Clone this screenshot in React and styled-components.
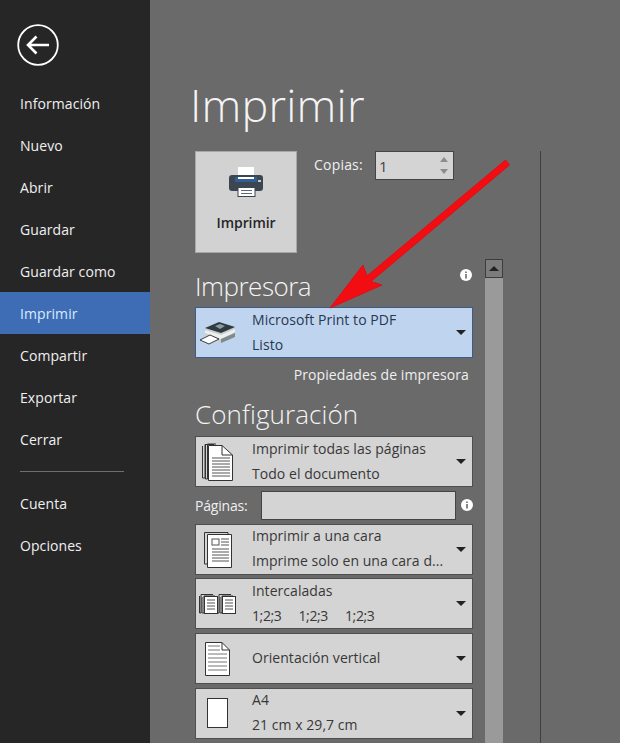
import styled, { createGlobalStyle } from 'styled-components'

const GlobalStyle = createGlobalStyle`
    html, body {
        margin: 0;
        padding: 0;
        background: #6a6a6a;
    }
    * {
        box-sizing: border-box;
    }
`

const navTop = ['Información', 'Nuevo', 'Abrir', 'Guardar', 'Guardar como', 'Imprimir', 'Compartir', 'Exportar', 'Cerrar']
const navBottom = ['Cuenta', 'Opciones']

const BackIcon = () => (
    <svg width="42" height="42" viewBox="0 0 42 42" fill="none" stroke="#fff">
        <circle cx="21" cy="21" r="19.8" strokeWidth="1.8" />
        <path d="M11 21H32M19.5 12.5L11 21L19.5 29.5" strokeWidth="2.6" />
    </svg>
)

const BigPrinter = () => (
    <svg width="34" height="30" viewBox="0 0 34 30">
        <rect x="9" y="0" width="16" height="12" fill="#fff" />
        <path d="M3 8H31Q34 8 34 11V21Q34 24 31 24H3Q0 24 0 21V11Q0 8 3 8Z" fill="#3b4650" />
        <rect x="6" y="10" width="22" height="5" fill="#2f5f96" />
        <rect x="9" y="10" width="16" height="2" fill="#fff" />
        <rect x="9" y="20.5" width="17" height="9" fill="#fff" stroke="#3b4650" strokeWidth="1" />
        <path d="M12 23.5H23M12 26.5H23" stroke="#5a6a76" strokeWidth="1" />
        <rect x="29" y="13" width="3" height="2" fill="#c7ccd0" />
    </svg>
)

const SmallPrinter = () => (
    <svg width="36" height="24" viewBox="0 0 36 24">
        <path d="M5 7L19 1L35 6V16L21 22L5 14Z" fill="#c9cfd0" />
        <path d="M5 7L19 1L35 6L21 12Z" fill="#2e3b40" />
        <path d="M15 5L20 3L25 5L20 8Z" fill="#8d9a9e" />
        <path d="M5 9L21 14L35 8V11L21 18L5 12Z" fill="#eef0f0" />
        <path d="M21 18V22L35 16V12Z" fill="#7f8a8c" />
        <path d="M0 19L10 14L19 18L9 23Z" fill="#fff" stroke="#2a2a2a" strokeWidth="0.9" />
    </svg>
)

const lines = (x1, x2, ys) => ys.map((y) => `M${x1} ${y}H${x2}`).join('')

const StackIcon = () => (
    <svg width="32" height="38" viewBox="0 0 32 38" fill="#fff" stroke="#333" strokeWidth="1">
        <path d="M0.5 3V35H3V1.5H12" fill="none" />
        <path d="M3.5 2V36H5.5V1H14" fill="none" />
        <path d="M6.5 2.5H20L30.5 12V37.5H6.5Z" />
        <path d="M20 2.5V12H30.5" fill="none" />
        <path d={lines(10, 28, [15, 18, 21, 24, 27, 30, 33])} stroke="#555" fill="none" />
    </svg>
)

const DuplexIcon = () => (
    <svg width="28" height="37" viewBox="0 0 28 37" fill="#fff" stroke="#333" strokeWidth="1">
        <path d="M0.5 1.5H24V33H0.5Z" fill="none" />
        <path d="M3.5 3.5H27.5V36.5H3.5Z" />
        <rect x="8" y="8" width="7" height="6" fill="none" stroke="#555" />
        <path d={lines(17, 25, [8, 11, 14]) + lines(8, 25, [18, 21, 24, 27, 30])} stroke="#555" fill="none" />
    </svg>
)

const Sheet = ({ x }) => (
    <g transform={`translate(${x} 0)`}>
        <path d="M0.5 3V20H2V1.5H14" fill="none" />
        <path d="M3 4V20H5V3H16" fill="none" />
        <rect x="5.5" y="3.5" width="13" height="17" />
        <path d={lines(8, 16, [7, 10, 13, 16])} stroke="#555" fill="none" />
    </g>
)

const CollateIcon = () => (
    <svg width="37" height="22" viewBox="0 0 37 22" fill="#fff" stroke="#333" strokeWidth="1">
        <Sheet x={0} />
        <Sheet x={18} />
    </svg>
)

const PortraitIcon = () => (
    <svg width="25" height="34" viewBox="0 0 25 34" fill="#fff" stroke="#333" strokeWidth="1">
        <path d="M0.5 0.5H17L24.5 8V33.5H0.5Z" />
        <path d="M17 0.5V8H24.5" fill="none" />
        <path d={lines(3, 15, [4, 8]) + lines(3, 22, [12, 16, 20, 24, 28])} stroke="#777" fill="none" />
    </svg>
)

const BlankIcon = () => (
    <svg width="21" height="30" viewBox="0 0 21 30" fill="#fff" stroke="#333" strokeWidth="1">
        <rect x="0.5" y="0.5" width="20" height="29" />
    </svg>
)

const InfoIcon = () => (
    <svg width="12" height="12" viewBox="0 0 12 12">
        <circle cx="6" cy="6" r="6" fill="#fff" />
        <path d="M6 2.5V4M6 5V9.5" stroke="#555" strokeWidth="1.4" fill="none" />
    </svg>
)

const Dropdown = ({ icon, title, sub, selected }) => (
    <DropBox $selected={selected}>
        <DropIcon>{icon}</DropIcon>
        <DropText>
            <DropLine>{title}</DropLine>
            {sub && <DropLine>{sub}</DropLine>}
        </DropText>
        <Caret />
    </DropBox>
)

export default function App() {
    return (
        <Page>
            <GlobalStyle />
            <Sidebar>
                <BackButton><BackIcon /></BackButton>
                <Nav>
                    {navTop.map((item) => (
                        <NavItem key={item} $active={item === 'Imprimir'}>{item}</NavItem>
                    ))}
                    <NavRule />
                    {navBottom.map((item) => (
                        <NavItem key={item}>{item}</NavItem>
                    ))}
                </Nav>
            </Sidebar>
            <Main>
                <Title>Imprimir</Title>
                <Columns>
                    <Settings>
                        <TopRow>
                            <PrintButton>
                                <BigPrinter />
                                <PrintLabel>Imprimir</PrintLabel>
                            </PrintButton>
                            <CopiesLabel>Copias:</CopiesLabel>
                            <Spinner>
                                1
                                <SpinArrows>
                                    <SpinUp />
                                    <SpinDown />
                                </SpinArrows>
                            </Spinner>
                        </TopRow>
                        <SectionHead>
                            <SectionTitle $tracking="-0.5px">Impresora</SectionTitle>
                            <InfoIcon />
                        </SectionHead>
                        <Dropdown selected icon={<SmallPrinter />} title="Microsoft Print to PDF" sub="Listo" />
                        <PropsLink>Propiedades de impresora</PropsLink>
                        <ConfigHead>
                            <SectionTitle $tracking="0.1px">Configuración</SectionTitle>
                        </ConfigHead>
                        <DropList>
                            <Dropdown icon={<StackIcon />} title="Imprimir todas las páginas" sub="Todo el documento" />
                            <PagesRow>
                                <PagesLabel>Páginas:</PagesLabel>
                                <PagesInput />
                                <InfoIcon />
                            </PagesRow>
                            <Dropdown icon={<DuplexIcon />} title="Imprimir a una cara" sub="Imprime solo en una cara d..." />
                            <Dropdown
                                icon={<CollateIcon />}
                                title="Intercaladas"
                                sub={<Collate><span>1;2;3</span><span>1;2;3</span><span>1;2;3</span></Collate>}
                            />
                            <Dropdown icon={<PortraitIcon />} title="Orientación vertical" />
                            <Dropdown icon={<BlankIcon />} title="A4" sub="21 cm x 29,7 cm" />
                        </DropList>
                    </Settings>
                    <Scrollbar>
                        <ScrollButton />
                    </Scrollbar>
                    <Divider />
                </Columns>
            </Main>
            <Arrow width="620" height="743" viewBox="0 0 620 743">
                <path
                    d="M505.5 160L509.5 165L371 281.5L382 285L330 308L363 265L367 276Z"
                    fill="#f10d12"
                    stroke="#e00f14"
                    strokeWidth="1"
                    strokeLinejoin="round"
                />
            </Arrow>
        </Page>
    )
}

const Page = styled.div`
    position: relative;
    display: flex;
    width: 620px;
    height: 743px;
    overflow: hidden;
    background: #6a6a6a;
    font-family: "Open Sans", "Noto Sans", sans-serif;
`

const Sidebar = styled.div`
    display: flex;
    flex-direction: column;
    flex: 0 0 150px;
    background: #262626;
    padding-top: 24px;
`

const BackButton = styled.div`
    display: flex;
    height: 58px;
    padding-left: 17px;
`

const Nav = styled.div`
    display: flex;
    flex-direction: column;
`

const NavItem = styled.div`
    height: 42px;
    line-height: 44px;
    padding-left: 20px;
    font-size: 14px;
    letter-spacing: 0.08px;
    color: ${(p) => (p.$active ? '#d8ecff' : '#f0f0f0')};
    background: ${(p) => (p.$active ? '#3f6db5' : 'transparent')};
`

const NavRule = styled.div`
    width: 104px;
    height: 1px;
    margin: 11px 0 10px 20px;
    background: #6f6f6f;
`

const Main = styled.div`
    display: flex;
    flex-direction: column;
    flex: 1;
    min-width: 0;
    padding-left: 45px;
`

const Title = styled.h1`
    margin: 75px 0 0 -5px;
    height: 76px;
    font-size: 45px;
    line-height: 60px;
    font-weight: 300;
    letter-spacing: 0.2px;
    color: #f4f4f4;
`

const Columns = styled.div`
    display: flex;
    align-items: stretch;
    height: 592px;
`

const Settings = styled.div`
    display: flex;
    flex-direction: column;
    flex: 0 0 278px;
`

const TopRow = styled.div`
    display: flex;
    align-items: flex-start;
    height: 102px;
`

const PrintButton = styled.div`
    display: flex;
    flex-direction: column;
    align-items: center;
    width: 102px;
    height: 102px;
    padding-top: 15px;
    background: #d2d2d2;
    border: 1px solid #a8a8a8;
`

const PrintLabel = styled.div`
    margin-top: 16px;
    font-size: 14px;
    font-weight: 600;
    letter-spacing: -0.1px;
    color: #262626;
`

const CopiesLabel = styled.div`
    margin: 4px 0 0 17px;
    width: 61px;
    font-size: 14px;
    letter-spacing: 0.2px;
    color: #efefef;
`

const Spinner = styled.div`
    display: flex;
    align-items: center;
    justify-content: space-between;
    width: 79px;
    height: 29px;
    padding: 0 5px 0 3px;
    font-size: 15px;
    color: #444;
    background: #d4d4d4;
    border: 1px solid #444;
`

const SpinArrows = styled.div`
    display: flex;
    flex-direction: column;
    gap: 7px;
`

const SpinUp = styled.div`
    width: 0;
    height: 0;
    border-left: 4.5px solid transparent;
    border-right: 4.5px solid transparent;
    border-bottom: 5px solid #8c8c8c;
`

const SpinDown = styled.div`
    width: 0;
    height: 0;
    border-left: 4.5px solid transparent;
    border-right: 4.5px solid transparent;
    border-top: 5px solid #8c8c8c;
`

const SectionHead = styled.div`
    display: flex;
    align-items: flex-start;
    justify-content: space-between;
    height: 54px;
    padding: 16px 1px 0 0;
`

const ConfigHead = styled.div`
    height: 39px;
    margin-top: 7px;
`

const SectionTitle = styled.div`
    font-size: 26px;
    line-height: 34px;
    font-weight: 300;
    letter-spacing: ${(p) => p.$tracking};
    color: #f4f4f4;
`

const DropBox = styled.div`
    display: flex;
    align-items: center;
    flex: none;
    height: 51px;
    background: ${(p) => (p.$selected ? '#bfd4ef' : '#d4d4d4')};
    border: 1px solid ${(p) => (p.$selected ? '#3f5a86' : '#4e4e4e')};
    color: ${(p) => (p.$selected ? '#28384f' : '#383838')};
`

const DropIcon = styled.div`
    display: flex;
    align-items: center;
    justify-content: center;
    flex: 0 0 43px;
    margin-right: 13px;
`

const DropText = styled.div`
    flex: 1;
    min-width: 0;
    padding-bottom: 2px;
`

const DropLine = styled.div`
    height: 25px;
    line-height: 25px;
    font-size: 14px;
    letter-spacing: 0.05px;
    white-space: nowrap;
`

const Caret = styled.div`
    width: 0;
    height: 0;
    margin-right: 6px;
    border-left: 5px solid transparent;
    border-right: 5px solid transparent;
    border-top: 5px solid #222;
`

const PropsLink = styled.div`
    height: 32px;
    padding: 7px 4px 0 0;
    text-align: right;
    font-size: 14px;
    letter-spacing: 0.1px;
    color: #efefef;
`

const DropList = styled.div`
    display: flex;
    flex-direction: column;
    gap: 3.75px;
`

const PagesRow = styled.div`
    display: flex;
    align-items: center;
    height: 29px;
`

const PagesLabel = styled.div`
    flex: 0 0 66px;
    font-size: 14px;
    letter-spacing: -0.2px;
    color: #efefef;
`

const PagesInput = styled.div`
    width: 195px;
    height: 29px;
    margin-right: 5px;
    background: #d4d4d4;
    border: 1px solid #444;
`

const Collate = styled.div`
    display: grid;
    grid-template-columns: repeat(3, 46.5px);
    letter-spacing: -0.4px;
`

const Scrollbar = styled.div`
    flex: 0 0 18px;
    margin: 108px 0 0 12px;
    background: #9a9a9a;
`

const ScrollButton = styled.div`
    display: flex;
    align-items: center;
    justify-content: center;
    height: 19px;
    background: #7c7c7c;
    border: 1px solid #3d3d3d;
    &::before {
        content: '';
        border-left: 5px solid transparent;
        border-right: 5px solid transparent;
        border-bottom: 5px solid #222;
    }
`

const Divider = styled.div`
    flex: 0 0 1px;
    margin-left: 37px;
    background: #3f3f3f;
`

const Arrow = styled.svg`
    position: absolute;
    left: 0;
    top: 0;
    pointer-events: none;
`
